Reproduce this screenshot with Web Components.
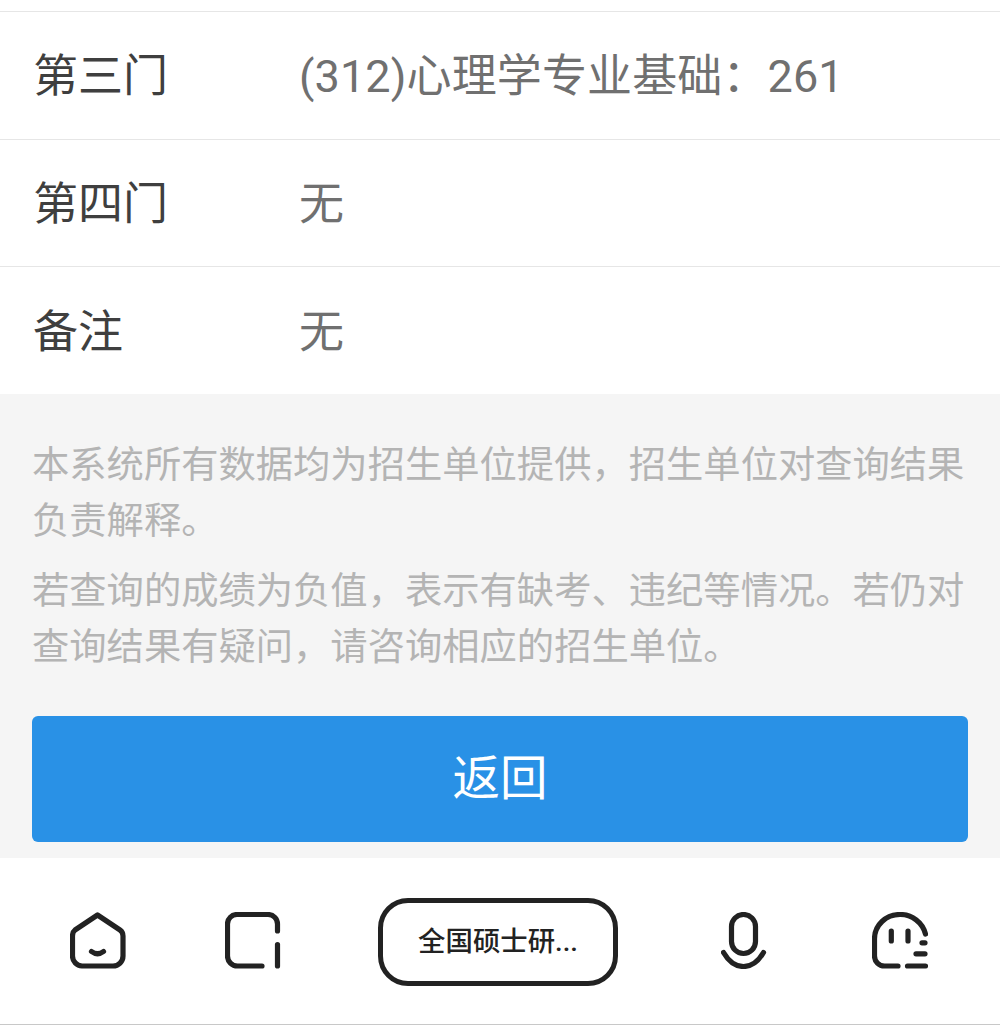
<!DOCTYPE html>
<html lang="zh-CN"><head><meta charset="utf-8"><title>成绩查询</title>
<style>
html,body{margin:0;padding:0;background:#fff;overflow:hidden}
body{font-family:Roboto,"Noto Sans CJK SC",sans-serif;width:1000px;height:1025px}
</style></head><body>
<result-page>
  <result-table>
    <result-row label="第三门">(312)心理学专业基础：261</result-row>
    <result-row label="第四门">无</result-row>
    <result-row label="备注" last>无</result-row>
  </result-table>
  <notice-panel>
    <p>本系统所有数据均为招生单位提供，招生单位对查询结果负责解释。</p>
    <p>若查询的成绩为负值，表示有缺考、违纪等情况。若仍对查询结果有疑问，请咨询相应的招生单位。</p>
    <back-button slot="action">返回</back-button>
  </notice-panel>
  <browser-bar title-text="全国硕士研..."></browser-bar>
</result-page>
<script>
function def(name,html,init){customElements.define(name,class extends HTMLElement{constructor(){super();const r=this.attachShadow({mode:'open'});r.innerHTML=html;}connectedCallback(){if(init)init(this);}})}
def('result-page',`<style>:host{display:flex;flex-direction:column;width:1000px;height:1025px}</style><slot></slot>`);
def('result-table',`<style>:host{display:block;padding-top:11px}.l{height:1px;background:#e6e6e6}</style><div class="l"></div><slot></slot>`);
def('result-row',`<style>:host{display:grid;grid-template-columns:266px 1fr;align-items:center;height:126.67px;padding-left:33px;border-bottom:1px solid #e6e6e6;font-size:45px;line-height:1}
:host([last]){border-bottom:none;height:127px}
span{padding-top:3px}
.k{color:#3f3f3f}.v{color:#707070;white-space:nowrap;letter-spacing:.12px}</style><span class="k"></span><span class="v"><slot></slot></span>`,el=>{el.shadowRoot.querySelector('.k').textContent=el.getAttribute('label')});
def('notice-panel',`<style>:host{display:block;background:#f5f5f5;height:464px;box-sizing:border-box;padding:43px 32px 16px}
.t{font-size:37.3px;line-height:56px;color:#b4b4b4;height:279px}
::slotted(p){margin:0 0 14px;padding:0}
.a{display:block}</style><div class="t"><slot></slot></div><div class="a"><slot name="action"></slot></div>`);
def('back-button',`<style>:host{display:flex;align-items:center;justify-content:center;height:126px;background:#2991e6;border-radius:6px;color:#fff;font-size:47.5px;line-height:1}</style><slot></slot>`);
def('browser-bar',`<style>:host{display:grid;grid-template-columns:196px 114px 376px 116px 196px;align-items:center;justify-items:center;height:166px;border-bottom:1px solid #c8c8c8;background:#fff}
svg{display:block;fill:none;stroke:#222;stroke-linecap:round;stroke-linejoin:round;stroke-width:5.2px;margin-top:-1px}
.pill{width:240px;height:88px;box-sizing:border-box;border:5px solid #222;border-radius:30px;display:flex;align-items:center;justify-content:center;font-size:27.4px;font-weight:500;color:#222;margin-top:1px;padding-bottom:5px;white-space:nowrap}</style>
<svg width="56" height="57" viewBox="0 0 56 57"><path d="M27.500 3 50 18Q53 20 53 24V44A10 10 0 0 1 43 54H12A10 10 0 0 1 2.500 44V24Q2.500 20 5 18Z"/><path d="M21.500 39.500Q27.500 44 33.500 39.500"/></svg>
<svg width="56" height="57" viewBox="0 0 56 57"><path d="M52.500 19V12A9.500 9.500 0 0 0 43 2.500H12A9.500 9.500 0 0 0 2.500 12V44A10 10 0 0 0 12.500 54H37"/><path d="M52.500 32.500V54"/></svg>
<div class="pill" id="p"></div>
<svg width="46" height="57" viewBox="0 0 46 57"><rect x="10.500" y="2.500" width="24" height="39" rx="12" ry="12"/><path d="M2.500 40.500C8 50 15 54.500 22.500 54.500S37 50 42.500 40.500"/></svg>
<svg width="56" height="57" viewBox="0 0 56 57"><path d="M53.500 22A26 26 0 0 0 28 2.500C14 2.500 2.500 13 2.500 27V44A10 10 0 0 0 12.500 54H26"/><path d="M35.500 54H53.500M44 41.800H53M50 30.800H53"/><path d="M19.300 19V29M36 19V29"/></svg>`,el=>{el.shadowRoot.getElementById('p').textContent=el.getAttribute('title-text')});
</script>
</body></html>
